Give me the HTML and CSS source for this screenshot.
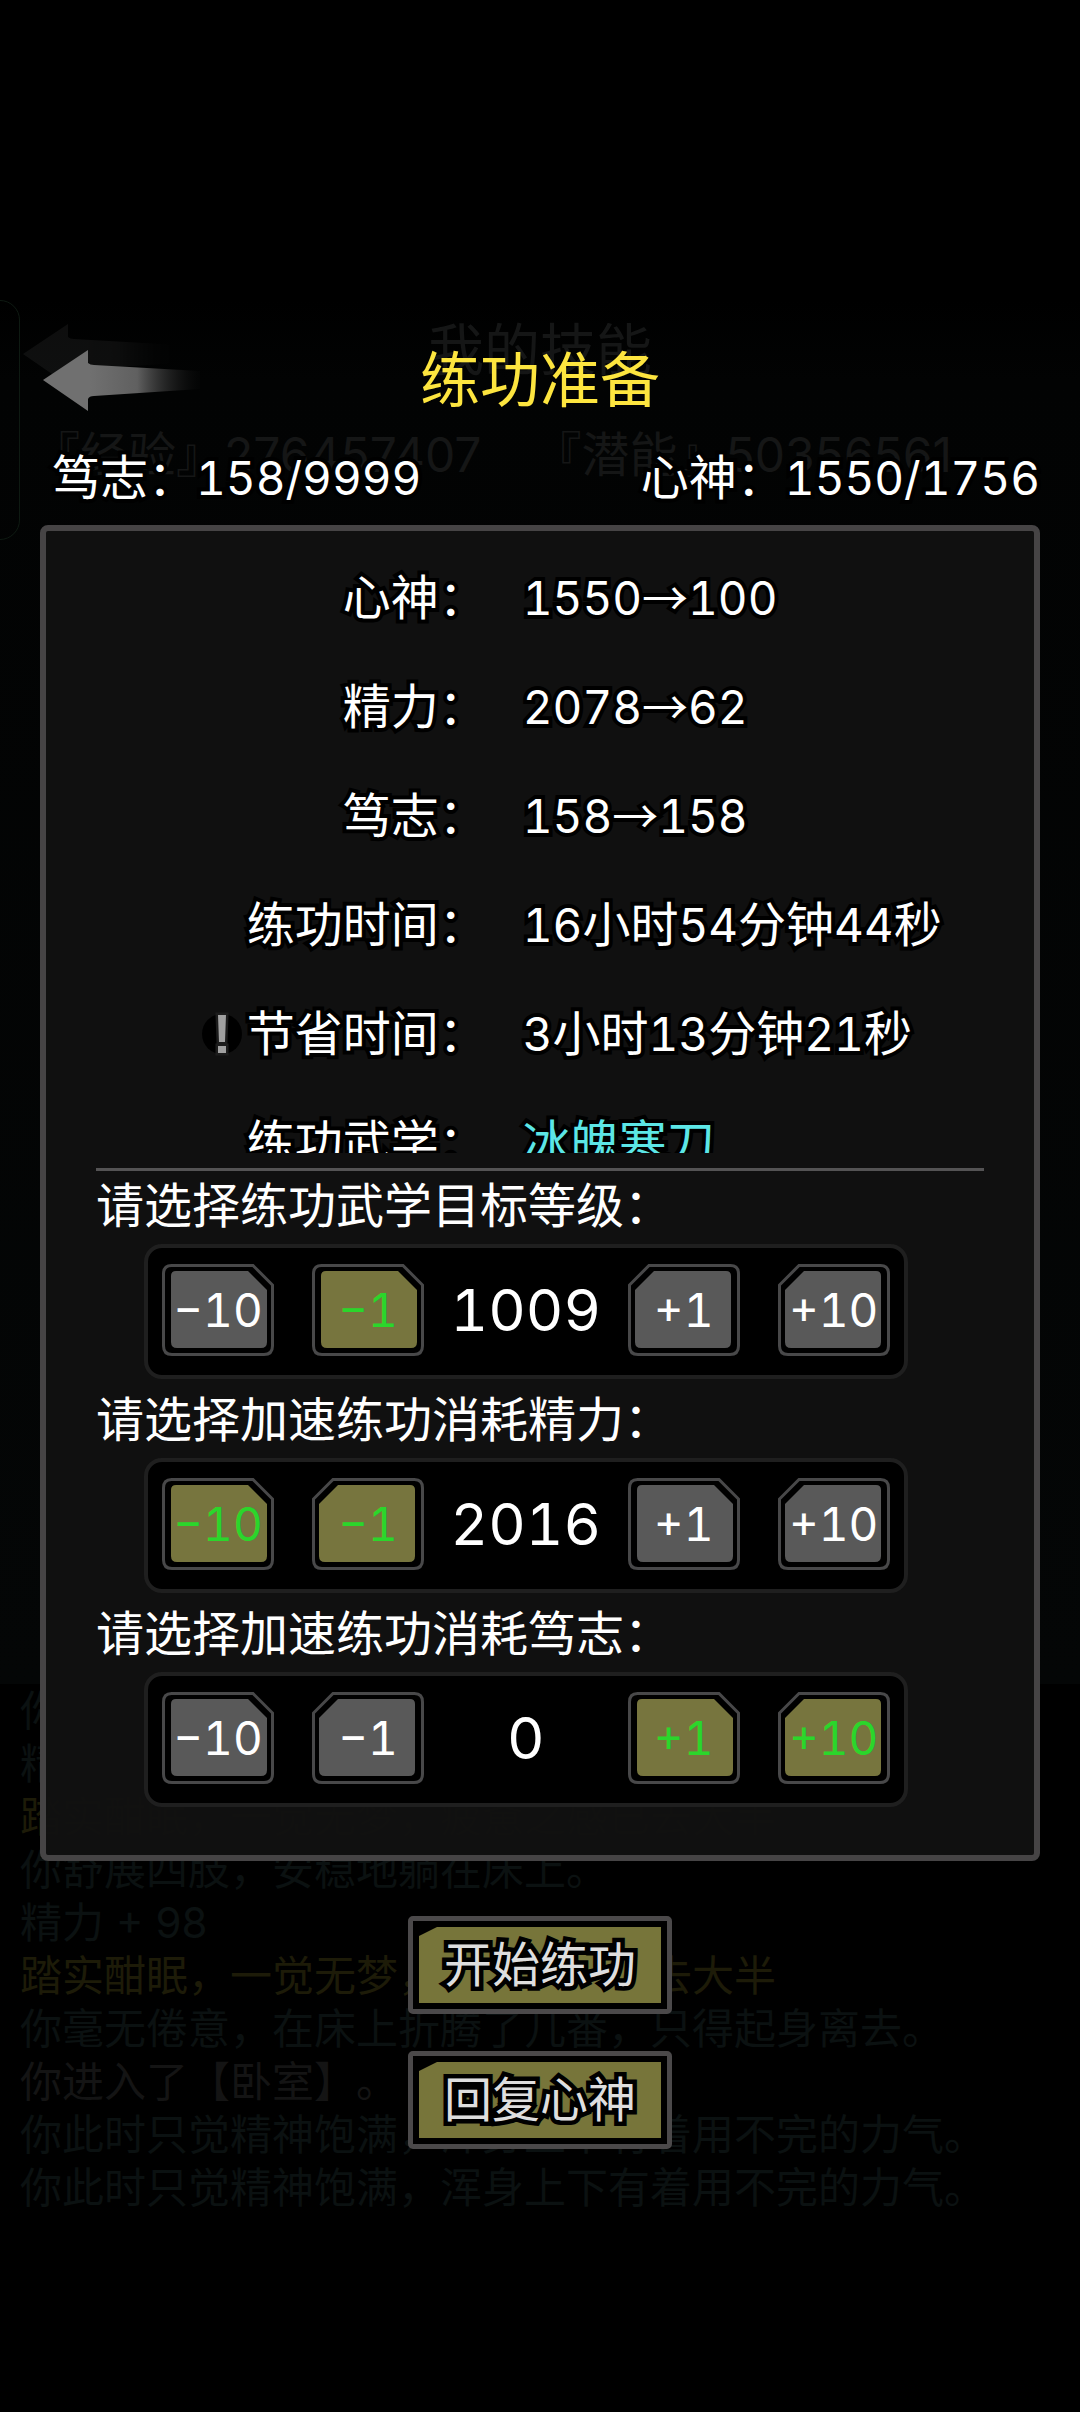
FILE: index.html
```html
<!DOCTYPE html>
<html lang="zh-CN">
<head>
    <meta charset="UTF-8">
    <meta name="viewport" content="width=device-width, initial-scale=1.0">
    <title>练功准备</title>
    <link rel="stylesheet" href="styles.css">
</head>
<body>
    <!-- shared shapes -->
    <svg class="defs" width="0" height="0" aria-hidden="true">
        <defs>
            <linearGradient id="fade" x1="0" y1="0" x2="1" y2="0">
                <stop offset="0.3" stop-color="#707070"/>
                <stop offset="0.6" stop-color="#606060"/>
                <stop offset="1" stop-color="#111" stop-opacity="0.1"/>
            </linearGradient>
            <symbol id="arrow" viewBox="0 0 160 64">
                <path d="M3 32 L48 2 V15 Q50 17 54 17 L160 23 V41 L54 48 Q49 48 48 51 V63 Z" fill="url(#fade)"/>
            </symbol>
            <symbol id="key" viewBox="0 0 112 92">
                <path class="key-edge" d="M9.500 1.500 H91 L110.500 21 V82 Q110.500 90.500 102 90.500 H10 Q1.500 90.500 1.500 82 V10 Q1.500 1.500 9.500 1.500 Z"/>
                <path class="key-fill" d="M14 7 H86 L105 26 V78 Q105 84 99 84 H15 Q9 84 9 78 V12 Q9 7 14 7 Z"/>
            </symbol>
        </defs>
    </svg>

    <div class="game">
        <!-- skills page and message log under the dark mask -->
        <div class="backdrop" aria-hidden="true">
            <div class="skills">
                <div class="side-tab"></div>
                <svg class="skills-back"><use href="#arrow"/></svg>
                <div class="skills-title">我的技能</div>
                <div class="skills-points"><span>『经验』276457407</span><span>『潜能』50356561</span></div>
                <div class="skills-tabs">
                    <span>拳脚</span><span>兵器</span><span>轻功</span><span>内功</span><span>招架</span><span>知识</span>
                </div>
            </div>
            <div class="log">
                <p>你舒展四肢，安稳地躺在床上。</p>
                <p>精力 + 98</p>
                <p class="gold">踏实酣眠，一觉无梦，疲惫之感已去大半</p>
                <p>你舒展四肢，安稳地躺在床上。</p>
                <p>精力 + 98</p>
                <p class="gold">踏实酣眠，一觉无梦，疲惫之感已去大半</p>
                <p>你毫无倦意，在床上折腾了几番，只得起身离去。</p>
                <p class="gray">你进入了【卧室】。</p>
                <p>你此时只觉精神饱满，浑身上下有着用不完的力气。</p>
                <p>你此时只觉精神饱满，浑身上下有着用不完的力气。</p>
            </div>
        </div>

        <main class="dialog">
            <header class="header">
                <button class="back" type="button" aria-label="返回"><svg><use href="#arrow"/></svg></button>
                <h1>练功准备</h1>
            </header>

            <div class="stats">
                <span>笃志：<span class="num">158/9999</span></span>
                <span>心神：<span class="num">1550/1756</span></span>
            </div>

            <section class="panel">
                <dl class="summary">
                    <dt>心神：</dt>
                    <dd><span class="num">1550<span class="to">→</span>100</span></dd>
                    <dt>精力：</dt>
                    <dd><span class="num">2078<span class="to">→</span>62</span></dd>
                    <dt>笃志：</dt>
                    <dd><span class="num">158<span class="to">→</span>158</span></dd>
                    <dt>练功时间：</dt>
                    <dd><span class="num">16</span>小时<span class="num">54</span>分钟<span class="num">44</span>秒</dd>
                    <dt>
                        <button class="tip" type="button" aria-label="说明">
                            <svg viewBox="0 0 42 46">
                                <circle cx="21" cy="23" r="20" fill="#000"/>
                                <path d="M17 4 H25 L24 31 H18 Z M17 35 H25 V42 H17 Z" fill="#a0a0a0" stroke="#1c1c1c" stroke-width="5" paint-order="stroke"/>
                            </svg>
                        </button>
                        节省时间：
                    </dt>
                    <dd><span class="num">3</span>小时<span class="num">13</span>分钟<span class="num">21</span>秒</dd>
                    <dt>练功武学：</dt>
                    <dd class="cyan">冰魄寒刀</dd>
                </dl>
                <hr>

                <h2 id="level">请选择练功武学目标等级：</h2>
                <div class="stepper" role="group" aria-labelledby="level">
                    <button class="key" type="button"><svg><use href="#key"/></svg><span class="num">−10</span></button>
                    <button class="key on" type="button"><svg><use href="#key"/></svg><span class="num">−1</span></button>
                    <output>1009</output>
                    <button class="key flip" type="button"><svg><use href="#key"/></svg><span class="num">+1</span></button>
                    <button class="key flip" type="button"><svg><use href="#key"/></svg><span class="num">+10</span></button>
                </div>

                <h2 id="energy">请选择加速练功消耗精力：</h2>
                <div class="stepper" role="group" aria-labelledby="energy">
                    <button class="key on" type="button"><svg><use href="#key"/></svg><span class="num">−10</span></button>
                    <button class="key on flip" type="button"><svg><use href="#key"/></svg><span class="num">−1</span></button>
                    <output>2016</output>
                    <button class="key" type="button"><svg><use href="#key"/></svg><span class="num">+1</span></button>
                    <button class="key flip" type="button"><svg><use href="#key"/></svg><span class="num">+10</span></button>
                </div>

                <h2 id="will">请选择加速练功消耗笃志：</h2>
                <div class="stepper" role="group" aria-labelledby="will">
                    <button class="key" type="button"><svg><use href="#key"/></svg><span class="num">−10</span></button>
                    <button class="key flip" type="button"><svg><use href="#key"/></svg><span class="num">−1</span></button>
                    <output>0</output>
                    <button class="key on" type="button"><svg><use href="#key"/></svg><span class="num">+1</span></button>
                    <button class="key on flip" type="button"><svg><use href="#key"/></svg><span class="num">+10</span></button>
                </div>
            </section>

            <div class="actions">
                <button class="action" type="button"><span>开始练功</span></button>
                <button class="action" type="button"><span>回复心神</span></button>
            </div>
        </main>
    </div>
</body>
</html>
```
FILE: styles.css
```css
* {
    box-sizing: border-box;
}
body {
    margin: 0;
    background: #000;
    color: #fff;
    font-family: Inter, "Noto Sans CJK SC", sans-serif;
    font-size: 48px;
    line-height: 60px;
    text-spacing-trim: space-all;
}
button {
    padding: 0;
    border: 0;
    background: none;
    color: inherit;
    font: inherit;
}
h1, h2, p, dl, dd {
    margin: 0;
    font-weight: normal;
}
.defs {
    position: absolute;
}
.num {
    font-size: 46px;
    font-variant-numeric: tabular-nums;
}
.game {
    position: relative;
    min-height: 100vh;
    overflow: hidden;
}

/* page under the mask */
.backdrop {
    position: absolute;
    inset: 0;
    padding-top: 300px;
    color: #151616;
    white-space: nowrap;
}
.skills {
    position: relative;
    height: 1384px;
    background: linear-gradient(#000, #020303 80px, #040606);
}
.side-tab {
    position: absolute;
    left: -20px;
    width: 40px;
    height: 240px;
    border: 1px solid #0e1a12;
    border-radius: 20px;
}
.skills-back {
    position: absolute;
    left: 20px;
    top: 22px;
    width: 160px;
    height: 64px;
    opacity: 0.12;
}
.skills-title {
    padding-top: 20px;
    font-size: 56px;
    text-align: center;
}
.skills-points {
    display: flex;
    gap: 52px;
    padding: 45px 32px 0;
}
.skills-tabs {
    display: flex;
    justify-content: space-around;
    padding: 60px 60px 0;
    font-size: 42px;
    font-weight: bold;
    color: #000;
}
.log {
    padding: 0 20px;
    font-size: 42px;
    line-height: 53px;
    color: #0b1111;
    background: #000;
}
.log .gold {
    color: #1d1b08;
}
.log .gray {
    color: #141414;
}

/* dialog */
.dialog {
    position: relative;
    padding: 344px 40px 0;
}
.header {
    display: grid;
    grid-template-columns: 1fr auto 1fr;
    align-items: center;
}
.header h1 {
    font-size: 60px;
    line-height: 72px;
    color: #fde53f;
}
.back {
    width: 160px;
    height: 64px;
}
.back svg {
    display: block;
    width: 100%;
    height: 100%;
}
.stats {
    display: flex;
    justify-content: space-between;
    margin-top: 32px;
    padding-left: 12px;
}
.stats, .summary {
    -webkit-text-stroke: 8px #000;
    paint-order: stroke fill;
}
.panel {
    margin-top: 17px;
    padding: 0 50px 48px;
    border: 6px solid #464445;
    border-radius: 8px;
    background: rgba(17, 17, 17, 0.96);
}
.summary {
    display: grid;
    grid-template-columns: 44% 1fr;
    grid-auto-rows: 109px;
    column-gap: 36px;
    align-items: center;
    height: 622px;
    padding-top: 12px;
    overflow: hidden;
}
.summary dt {
    display: flex;
    justify-content: flex-end;
    align-items: center;
}
.summary .to {
    font-family: "Noto Sans CJK SC", sans-serif;
    line-height: 1;
}
.summary .cyan {
    color: #5ce6e6;
}
.tip {
    width: 42px;
    height: 46px;
    margin-right: 4px;
}
.tip svg {
    display: block;
}
hr {
    height: 3px;
    margin: 15px 0 8px;
    border: 0;
    background: #545354;
}
h2 {
    font-size: 48px;
    line-height: 54px;
}
.stepper {
    display: flex;
    align-items: center;
    width: 86%;
    height: 135px;
    margin: 11px 0 14px 48px;
    padding: 0 14px 3px;
    border: 4px solid #1f1f1f;
    border-radius: 18px;
    background: #000;
}
.stepper:last-child {
    margin-bottom: 0;
}
.stepper output {
    flex: 1;
    font-size: 58px;
    font-variant-numeric: tabular-nums;
    text-align: center;
}
.key {
    position: relative;
    width: 112px;
    height: 92px;
}
.key:first-child {
    margin-right: 38px;
}
.key:last-child {
    margin-left: 38px;
}
.key svg {
    position: absolute;
    inset: 0;
    width: 100%;
    height: 100%;
    fill: #595959;
}
.key.flip svg {
    transform: scaleX(-1);
}
.key.on svg {
    fill: #77753e;
}
.key.on {
    color: #2bd62b;
}
.key-edge {
    fill: #000;
    stroke: #484849;
    stroke-width: 3px;
}
.key span {
    position: relative;
}
.actions {
    display: flex;
    flex-direction: column;
    align-items: center;
    gap: 37px;
    margin-top: 55px;
}
.action {
    width: 264px;
    height: 98px;
    padding: 6px;
    border: 5px solid #4b494a;
    border-radius: 5px;
    background: #000;
}
.action span {
    display: block;
    line-height: 76px;
    color: #dedede;
    background: #77753a;
    clip-path: polygon(0 9px, 18px 0, 100% 0, 100% 100%, 0 100%);
    -webkit-text-stroke: 9px #000;
    paint-order: stroke fill;
}
```
